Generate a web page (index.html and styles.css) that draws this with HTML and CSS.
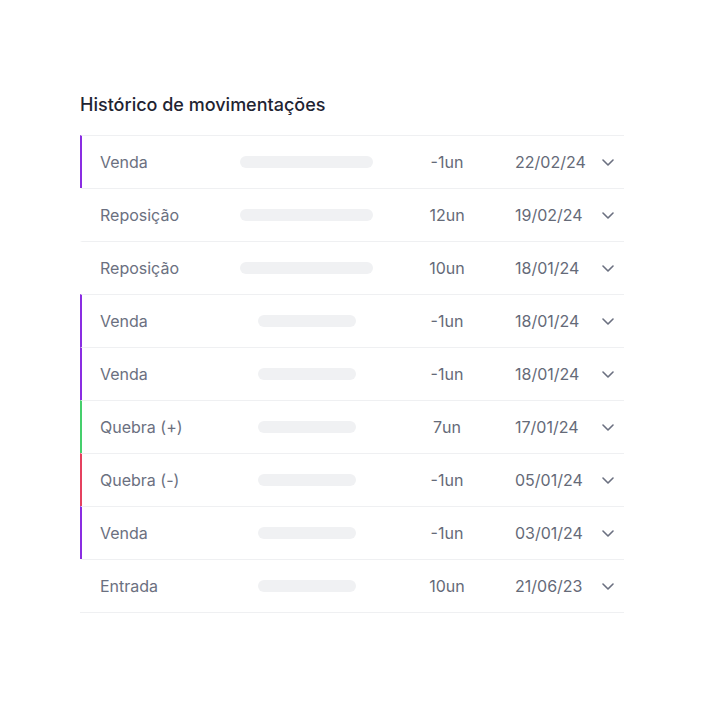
FILE: index.html
```html
<!DOCTYPE html>
<html lang="pt-BR">
<head>
<meta charset="utf-8">
<title>Histórico de movimentações</title>
<link rel="stylesheet" href="styles.css">
</head>
<body>
<section class="history">
  <h2 class="title">Histórico de movimentações</h2>
  <ul class="list">
    <li class="row sale"><span class="type">Venda</span><span class="skel"><i class="bar wide"></i></span><span class="qty">-1un</span><span class="date">22/02/24</span><svg class="chev" viewBox="0 0 12 7"><polyline points="1,1 6,6 11,1"/></svg></li>
    <li class="row"><span class="type">Reposição</span><span class="skel"><i class="bar wide"></i></span><span class="qty">12un</span><span class="date">19/02/24</span><svg class="chev" viewBox="0 0 12 7"><polyline points="1,1 6,6 11,1"/></svg></li>
    <li class="row"><span class="type">Reposição</span><span class="skel"><i class="bar wide"></i></span><span class="qty">10un</span><span class="date">18/01/24</span><svg class="chev" viewBox="0 0 12 7"><polyline points="1,1 6,6 11,1"/></svg></li>
    <li class="row sale"><span class="type">Venda</span><span class="skel"><i class="bar"></i></span><span class="qty">-1un</span><span class="date">18/01/24</span><svg class="chev" viewBox="0 0 12 7"><polyline points="1,1 6,6 11,1"/></svg></li>
    <li class="row sale"><span class="type">Venda</span><span class="skel"><i class="bar"></i></span><span class="qty">-1un</span><span class="date">18/01/24</span><svg class="chev" viewBox="0 0 12 7"><polyline points="1,1 6,6 11,1"/></svg></li>
    <li class="row gain"><span class="type">Quebra (+)</span><span class="skel"><i class="bar"></i></span><span class="qty">7un</span><span class="date">17/01/24</span><svg class="chev" viewBox="0 0 12 7"><polyline points="1,1 6,6 11,1"/></svg></li>
    <li class="row loss"><span class="type">Quebra (-)</span><span class="skel"><i class="bar"></i></span><span class="qty">-1un</span><span class="date">05/01/24</span><svg class="chev" viewBox="0 0 12 7"><polyline points="1,1 6,6 11,1"/></svg></li>
    <li class="row sale"><span class="type">Venda</span><span class="skel"><i class="bar"></i></span><span class="qty">-1un</span><span class="date">03/01/24</span><svg class="chev" viewBox="0 0 12 7"><polyline points="1,1 6,6 11,1"/></svg></li>
    <li class="row"><span class="type">Entrada</span><span class="skel"><i class="bar"></i></span><span class="qty">10un</span><span class="date">21/06/23</span><svg class="chev" viewBox="0 0 12 7"><polyline points="1,1 6,6 11,1"/></svg></li>
  </ul>
</section>
</body>
</html>
```
FILE: styles.css
```css
* { box-sizing: border-box; }
html, body { margin: 0; padding: 0; background: #ffffff; }
body {
  font-family: Inter, "Noto Sans", "Liberation Sans", sans-serif;
  color: #6b7080;
}
.history {
  width: 544px;
  margin: 92px 0 0 80px;
}
.title {
  margin: 0 0 18px 0;
  font-size: 18px;
  line-height: 25px;
  font-weight: 500;
  color: #1f2432;
}
.list {
  list-style: none;
  margin: 0;
  padding: 0;
  border-bottom: 1px solid #eff0f2;
}
.row {
  display: grid;
  grid-template-columns: 140px 133px 142px 1fr 12px;
  align-items: center;
  height: 53px;
  padding: 0 10px 0 18px;
  border-top: 1px solid #eff0f2;
  border-left: 2px solid transparent;
  font-size: 16px;
  line-height: 20px;
}
.row.sale { border-left-color: #8a2de2; }
.row.gain { border-left-color: #45cf6c; }
.row.loss { border-left-color: #e5415f; }
.type { color: #6b7080; }
.skel { display: flex; justify-content: center; }
.bar {
  display: block;
  width: 98px;
  height: 12px;
  border-radius: 6px;
  background: #f0f1f3;
}
.bar.wide { width: 133px; }
.qty { text-align: center; padding-left: 6px; color: #656a78; }
.date { color: #656a78; }
.chev {
  width: 12px;
  height: 7px;
  fill: none;
  stroke: #6b7080;
  stroke-width: 1.6;
  stroke-linecap: round;
  stroke-linejoin: round;
}
```
